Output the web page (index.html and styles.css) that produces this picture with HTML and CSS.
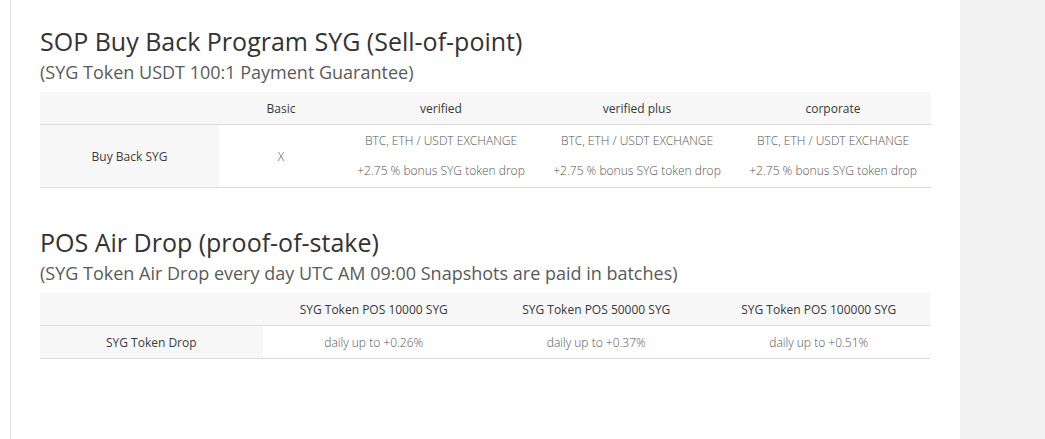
FILE: index.html
```html
<!DOCTYPE html>
<html lang="en">
<head>
<meta charset="utf-8">
<title>SYG Programs</title>
<link rel="stylesheet" href="styles.css">
</head>
<body>
<div class="page">
  <main class="main">
    <section class="section">
      <h2 class="title">SOP Buy Back Program SYG (Sell-of-point)</h2>
      <p class="subtitle">(SYG Token USDT 100:1 Payment Guarantee)</p>
      <table class="grid grid-sop">
        <colgroup>
          <col class="c-label1"><col class="c-basic"><col class="c-tier"><col class="c-tier"><col class="c-tier">
        </colgroup>
        <thead>
          <tr><th></th><th>Basic</th><th>verified</th><th>verified plus</th><th>corporate</th></tr>
        </thead>
        <tbody>
          <tr>
            <td class="label">Buy Back SYG</td>
            <td>X</td>
            <td class="multi"><span class="line">BTC, ETH / USDT EXCHANGE</span><span class="line">+2.75 % bonus SYG token drop</span></td>
            <td class="multi"><span class="line">BTC, ETH / USDT EXCHANGE</span><span class="line">+2.75 % bonus SYG token drop</span></td>
            <td class="multi"><span class="line">BTC, ETH / USDT EXCHANGE</span><span class="line">+2.75 % bonus SYG token drop</span></td>
          </tr>
        </tbody>
      </table>
    </section>
    <section class="section section-second">
      <h2 class="title">POS Air Drop (proof-of-stake)</h2>
      <p class="subtitle">(SYG Token Air Drop every day UTC AM 09:00 Snapshots are paid in batches)</p>
      <table class="grid grid-pos">
        <thead>
          <tr><th></th><th>SYG Token POS 10000 SYG</th><th>SYG Token POS 50000 SYG</th><th>SYG Token POS 100000 SYG</th></tr>
        </thead>
        <tbody>
          <tr>
            <td class="label">SYG Token Drop</td>
            <td>daily up to +0.26%</td>
            <td>daily up to +0.37%</td>
            <td>daily up to +0.51%</td>
          </tr>
        </tbody>
      </table>
    </section>
  </main>
  <aside class="aside"></aside>
</div>
</body>
</html>
```

FILE: styles.css
```css
html, body {
  margin: 0;
  padding: 0;
  background: #ffffff;
}

body {
  font-family: "Open Sans", "Liberation Sans", sans-serif;
  color: #333;
}

.page {
  display: flex;
  min-height: 439px;
  padding-left: 10px;
}

.main {
  width: 920px;
  border-left: 1px solid #e6e6e6;
  padding: 26px 0 0 29px;
  min-height: 413px;
}

.aside {
  flex: 1;
  background: #f1f1f1;
}

.section-second {
  margin-top: 39px;
}

.title {
  margin: 0;
  font-size: 25px;
  line-height: 30px;
  font-weight: 400;
  color: #333;
}

.subtitle {
  margin: 4px 0 8px;
  font-size: 18px;
  line-height: 24px;
  font-weight: 400;
  color: #5a5a5a;
}

.grid {
  width: 890px;
  border-collapse: collapse;
  table-layout: fixed;
  font-size: 12px;
}

.grid th {
  background: #f7f7f7;
  font-weight: 400;
  color: #383838;
  line-height: 16px;
  padding: 9px 4px 7px;
  border-bottom: 1px solid #dcdcdc;
  text-align: center;
}

.grid td {
  text-align: center;
  font-weight: 300;
  color: #555;
  line-height: 16px;
  padding: 9px 4px 7px;
  border-bottom: 1px solid #dcdcdc;
}

.grid td.label {
  background: #f7f7f7;
  font-weight: 400;
  color: #3c3c3c;
}

.grid td.multi {
  padding: 1px 4px 1px;
}

.line {
  display: block;
  line-height: 30px;
}

.c-label1 { width: 179px; }
.c-basic { width: 124px; }
.c-tier { width: 196px; }
```
